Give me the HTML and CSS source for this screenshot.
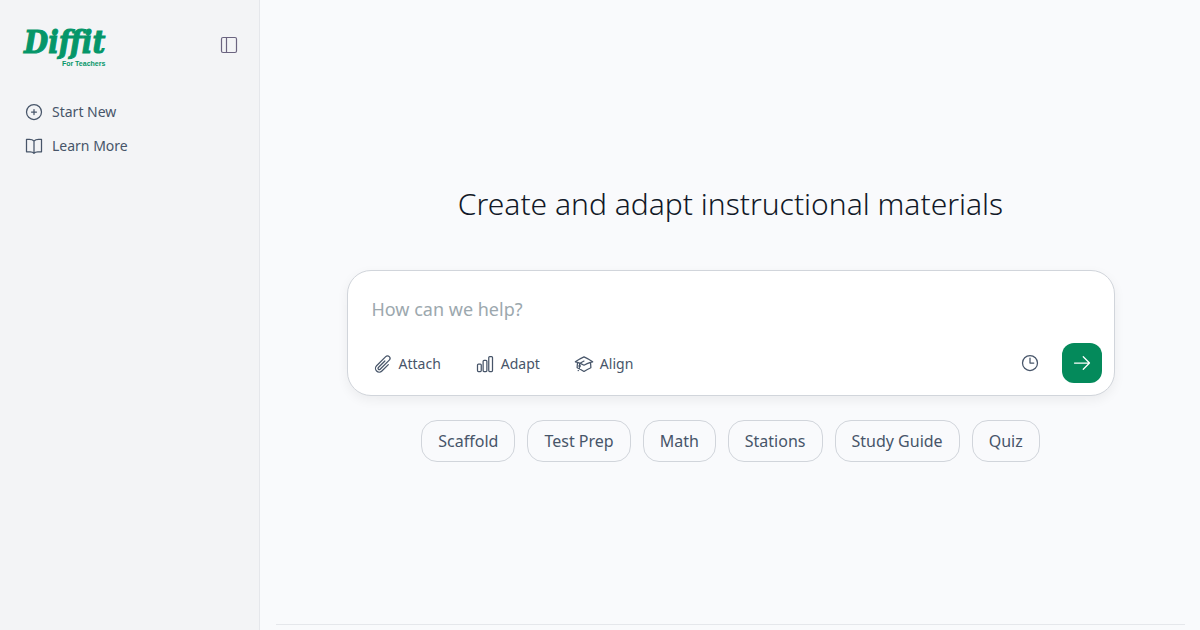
FILE: index.html
```html
<!DOCTYPE html>
<html lang="en">
<head>
    <meta charset="UTF-8">
    <meta name="viewport" content="width=device-width, initial-scale=1.0">
    <title>Diffit</title>
    <link rel="stylesheet" href="styles.css">
</head>
<body>
    <aside class="sidebar">
        <div class="sidebar-top">
            <a class="logo" href="#">
                <span class="logo-name">Diffit</span>
                <span class="logo-sub">For Teachers</span>
            </a>
            <button class="icon-button" type="button" aria-label="Toggle sidebar">
                <svg class="icon panel-icon" viewBox="0 0 20 20"><rect x="2.5" y="2.5" width="15" height="15" rx="1.5"/><path d="M7.5 2.5v15"/></svg>
            </button>
        </div>
        <nav class="menu">
            <a class="menu-item" href="#">
                <svg class="icon" viewBox="0 0 24 24"><path d="M12 9v6m3-3H9"/><circle cx="12" cy="12" r="9"/></svg>
                Start New
            </a>
            <a class="menu-item" href="#">
                <svg class="icon" viewBox="0 0 24 24"><path d="M12 6C10.500 4.500 8.500 4 6.500 4H3v15h4.500c2 0 3.500.500 4.500 1.800 1-1.300 2.500-1.800 4.500-1.800H21V4h-3.500c-2 0-4 .500-5.500 2zm0 0v14.500"/></svg>
                Learn More
            </a>
        </nav>
    </aside>

    <main class="main">
        <section class="hero">
            <h1>Create and adapt instructional materials</h1>
            <form class="prompt">
                <input class="prompt-input" type="text" placeholder="How can we help?" aria-label="How can we help?">
                <div class="toolbar">
                    <button class="tool" type="button">
                        <svg class="icon" viewBox="0 0 24 24"><path d="m18.375 12.739-7.693 7.693a4.500 4.500 0 0 1-6.364-6.364l10.940-10.940A3 3 0 1 1 19.500 7.372L8.552 18.320m.009-.01-.01.01m5.699-9.941-7.810 7.810a1.500 1.500 0 0 0 2.112 2.130"/></svg>
                        Attach
                    </button>
                    <button class="tool" type="button">
                        <svg class="icon" viewBox="0 0 24 24"><rect x="3" y="12" width="4.500" height="9" rx="1.125"/><rect x="9.750" y="7.500" width="4.500" height="13.500" rx="1.125"/><rect x="16.500" y="3" width="4.500" height="18" rx="1.125"/></svg>
                        Adapt
                    </button>
                    <button class="tool" type="button">
                        <svg class="icon" viewBox="0 0 24 24"><path d="M4.260 10.147a60.438 60.438 0 0 0-.491 6.347A48.620 48.620 0 0 1 12 20.904a48.620 48.620 0 0 1 8.232-4.410 60.460 60.460 0 0 0-.491-6.347m-15.482 0a50.636 50.636 0 0 0-2.658-.813A59.906 59.906 0 0 1 12 3.493a59.903 59.903 0 0 1 10.399 5.840c-.896.248-1.783.52-2.658.814m-15.482 0A50.717 50.717 0 0 1 12 13.489a50.702 50.702 0 0 1 7.740-3.342M6.750 15a.75.75 0 1 0 0-1.500.75.75 0 0 0 0 1.500Zm0 0v-3.675A55.378 55.378 0 0 1 12 8.443m-7.007 11.550A5.981 5.981 0 0 0 6.750 15.750v-1.500"/></svg>
                        Align
                    </button>
                    <button class="icon-button history" type="button" aria-label="History">
                        <svg class="icon" viewBox="0 0 24 24"><path d="M12 6v6h4.500"/><circle cx="12" cy="12" r="9"/></svg>
                    </button>
                    <button class="send" type="submit" aria-label="Send">
                        <svg class="icon" viewBox="0 0 24 24"><path d="M13.500 4.500 21 12m0 0-7.500 7.500M21 12H3"/></svg>
                    </button>
                </div>
            </form>
            <div class="chips">
                <button class="chip" type="button">Scaffold</button>
                <button class="chip" type="button">Test Prep</button>
                <button class="chip" type="button">Math</button>
                <button class="chip" type="button">Stations</button>
                <button class="chip" type="button">Study Guide</button>
                <button class="chip" type="button">Quiz</button>
            </div>
        </section>
        <footer class="footer"></footer>
    </main>
</body>
</html>
```
FILE: styles.css
```css
* {
    margin: 0;
    padding: 0;
    box-sizing: border-box;
}

body {
    font-family: "Noto Sans", sans-serif;
    background-color: #f9fafc;
    color: #475569;
    display: flex;
    min-height: 100vh;
}

a {
    color: inherit;
    text-decoration: none;
}

button {
    font-family: inherit;
    color: inherit;
    background: none;
    border: none;
    cursor: pointer;
}

.icon {
    display: block;
    flex: none;
    width: 20px;
    height: 20px;
    fill: none;
    stroke: currentColor;
    stroke-width: 1.5;
    stroke-linecap: round;
    stroke-linejoin: round;
}

/* Sidebar */
.sidebar {
    flex: none;
    width: 260px;
    padding: 24px 16px;
    background-color: #f3f4f6;
    border-right: 1px solid #e5e7eb;
}

.sidebar-top {
    display: flex;
    justify-content: space-between;
    align-items: flex-start;
    height: 70px;
    padding: 0 4px 0 8px;
}

.logo {
    display: flex;
    flex-direction: column;
    align-items: flex-end;
    gap: 3px;
    padding-top: 3px;
    color: #059669;
}

.logo-name {
    font: italic bold 31px/30px "DejaVu Serif Condensed", "DejaVu Serif", serif;
    -webkit-text-stroke: 1px currentColor;
}

.logo-sub {
    font: bold 7px/8px "Liberation Sans", sans-serif;
}

.icon-button {
    padding: 10px;
}

.panel-icon {
    color: #6b6480;
    stroke-width: 1.2;
}

.sidebar .icon-button {
    padding: 11px 0;
}

.menu-item {
    display: flex;
    align-items: center;
    gap: 8px;
    height: 34px;
    padding: 0 8px;
    font-size: 14px;
}

.menu-item .icon,
.tool .icon {
    margin-top: 2px;
}

/* Main area */
.main {
    flex: 1;
    display: flex;
    flex-direction: column;
    padding: 0 15px 0 16px;
}

.hero {
    flex: 1;
    display: flex;
    flex-direction: column;
    align-items: center;
    padding-top: 184px;
}

h1 {
    margin-bottom: 46px;
    font-size: 30px;
    font-weight: 300;
    line-height: 40px;
    color: #111827;
    text-align: center;
}

.prompt {
    width: 100%;
    max-width: 768px;
    padding: 20px 12px 12px 24px;
    background-color: #fff;
    border: 1px solid #d1d5db;
    border-radius: 24px;
    box-shadow: 0 4px 12px rgba(0, 0, 0, 0.06);
}

.prompt-input {
    display: block;
    width: 100%;
    height: 36px;
    margin-bottom: 16px;
    border: none;
    outline: none;
    font-family: inherit;
    font-size: 18px;
    color: #111827;
}

.prompt-input::placeholder {
    color: #9ca8ae;
}

.toolbar {
    display: flex;
    align-items: center;
    gap: 34px;
    padding-left: 1px;
}

.tool {
    display: flex;
    align-items: center;
    gap: 6px;
    font-size: 14px;
}

.history {
    margin-left: auto;
}

.send {
    display: flex;
    align-items: center;
    justify-content: center;
    width: 40px;
    height: 40px;
    margin-left: -22px;
    background-color: #048a5b;
    border-radius: 12px;
    color: #fff;
}

.chips {
    display: flex;
    flex-wrap: wrap;
    justify-content: center;
    gap: 12px;
    margin-top: 24px;
}

.chip {
    padding: 8px 16px;
    border: 1px solid #d1d5db;
    border-radius: 16px;
    font-size: 16px;
    line-height: 24px;
}

.footer {
    height: 6px;
    border-top: 1px solid #e5e7eb;
}
```
